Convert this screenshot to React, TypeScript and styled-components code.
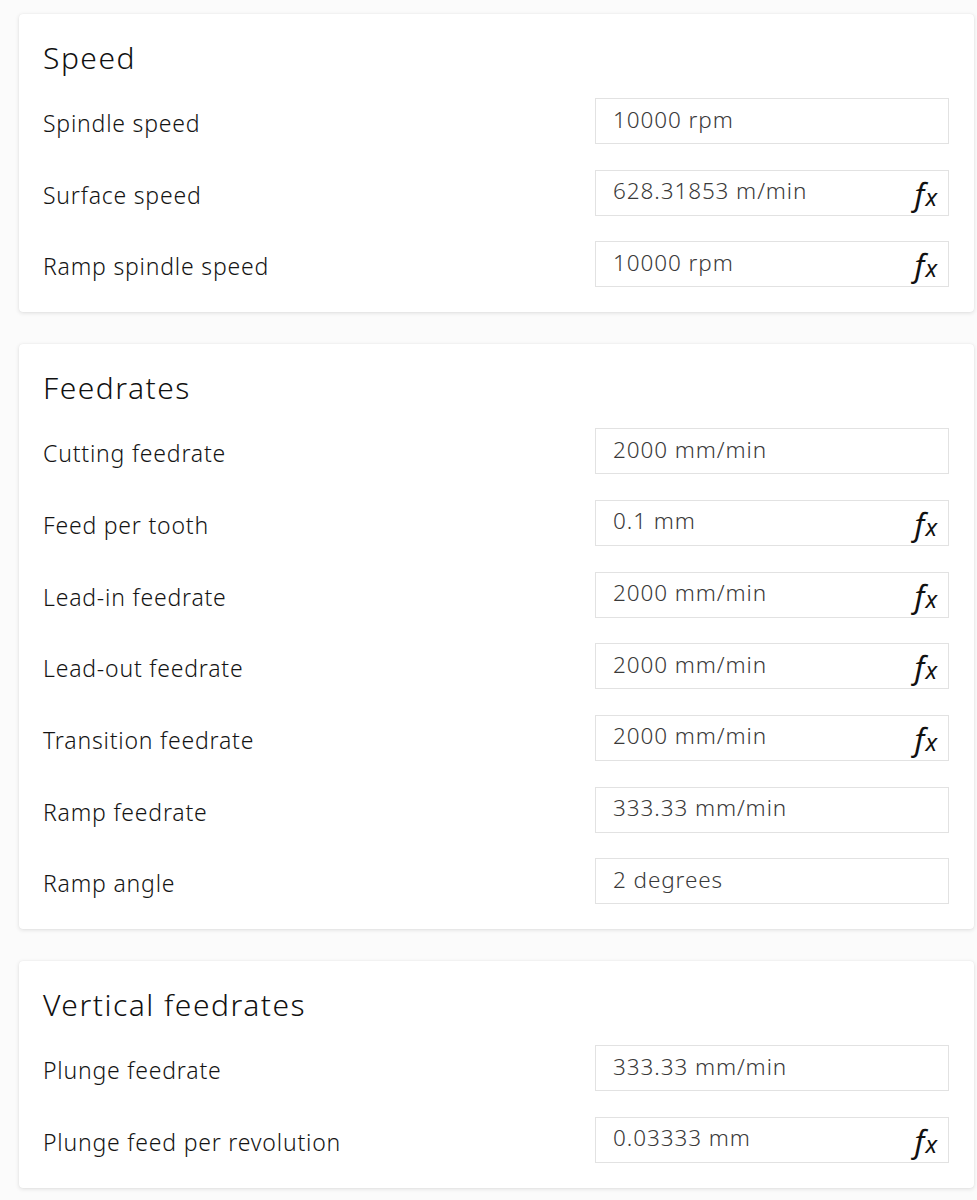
import { FC } from "react"
import styled, { createGlobalStyle } from "styled-components"

const GlobalStyle = createGlobalStyle`
    body {
        margin: 0;
        background: #fbfbfb;
        font-family: "Noto Sans", "Open Sans", sans-serif;
    }
`

const Page = styled.div`
    display: flex;
    flex-direction: column;
    gap: 32px;
    padding: 14px 3px 14px 19px;
`

const Card = styled.section`
    background: #fff;
    border-radius: 4px;
    box-shadow: 0 1px 4px rgba(0, 0, 0, 0.12), 0 0 1px rgba(0, 0, 0, 0.08);
    padding: 24px 25px 25px 24px;
`

const Title = styled.h2`
    margin: 0 0 20px;
    height: 40px;
    line-height: 40px;
    font-size: 30px;
    font-weight: 350;
    letter-spacing: 1.5px;
    color: #111;
`

const Rows = styled.div`
    display: flex;
    flex-direction: column;
    gap: 25.67px;
`

const Row = styled.div`
    display: grid;
    grid-template-columns: 1fr 354px;
    align-items: center;
    height: 46px;
`

const Label = styled.span`
    font-size: 23px;
    font-weight: 350;
    letter-spacing: 0.8px;
    color: #141414;
    padding-top: 4px;
`

const Field = styled.div`
    box-sizing: border-box;
    height: 46px;
    border: 1.5px solid #e2e2e2;
    display: flex;
    align-items: center;
    justify-content: space-between;
    padding: 0 11px 0 17px;
`

const Value = styled.span`
    font-size: 22.5px;
    font-weight: 330;
    letter-spacing: 0.9px;
    color: #3a3a3a;
    padding-bottom: 4px;
`

const Fx = styled.span`
    color: #111;
    display: flex;
    align-items: baseline;
    padding-top: 2px;
    font-style: italic;
    font-weight: 420;
    i {
        font-size: 31px;
    }
    span {
        font-size: 24px;
        margin-left: 1px;
    }
`

interface IParam {
    label: string
    value: string
    fx?: boolean
}

interface ISection {
    title: string
    params: IParam[]
}

const SECTIONS: ISection[] = [
    {
        title: "Speed",
        params: [
            { label: "Spindle speed", value: "10000 rpm" },
            { label: "Surface speed", value: "628.31853 m/min", fx: true },
            { label: "Ramp spindle speed", value: "10000 rpm", fx: true },
        ],
    },
    {
        title: "Feedrates",
        params: [
            { label: "Cutting feedrate", value: "2000 mm/min" },
            { label: "Feed per tooth", value: "0.1 mm", fx: true },
            { label: "Lead-in feedrate", value: "2000 mm/min", fx: true },
            { label: "Lead-out feedrate", value: "2000 mm/min", fx: true },
            { label: "Transition feedrate", value: "2000 mm/min", fx: true },
            { label: "Ramp feedrate", value: "333.33 mm/min" },
            { label: "Ramp angle", value: "2 degrees" },
        ],
    },
    {
        title: "Vertical feedrates",
        params: [
            { label: "Plunge feedrate", value: "333.33 mm/min" },
            { label: "Plunge feed per revolution", value: "0.03333 mm", fx: true },
        ],
    },
]

const ParamRow: FC<IParam> = ({ label, value, fx }) => (
    <Row>
        <Label>{label}</Label>
        <Field>
            <Value>{value}</Value>
            {fx ? <Fx><i>f</i><span>x</span></Fx> : null}
        </Field>
    </Row>
)

const App = () => (
    <>
        <GlobalStyle />
        <Page>
            {SECTIONS.map(({ title, params }) => (
                <Card key={title}>
                    <Title>{title}</Title>
                    <Rows>
                        {params.map((p) => <ParamRow key={p.label} {...p} />)}
                    </Rows>
                </Card>
            ))}
        </Page>
    </>
)

export default App
